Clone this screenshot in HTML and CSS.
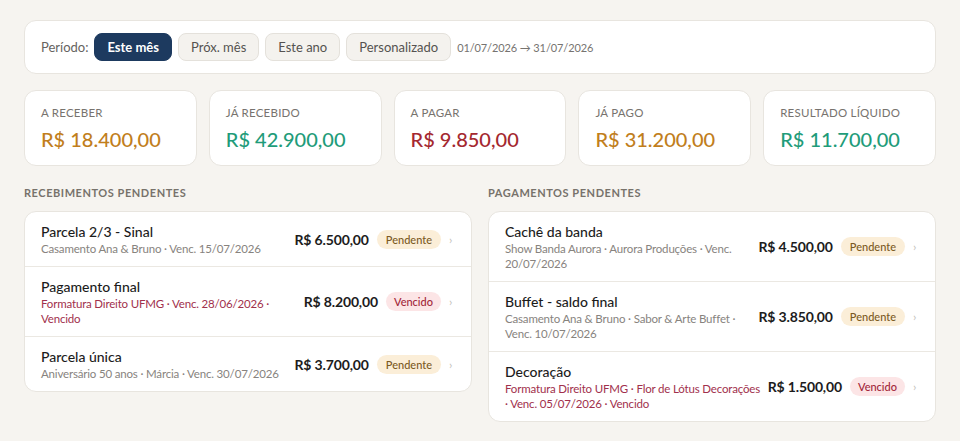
FILE: index.html
```html
<!DOCTYPE html>
<html lang="pt-BR">
<head>
<meta charset="utf-8">
<title>Financeiro</title>
<link rel="stylesheet" href="styles.css">
</head>
<body>
<main class="page">
  <section class="card filter">
    <span class="filter-label">Período:</span>
    <button class="chip chip-active">Este mês</button>
    <button class="chip">Próx. mês</button>
    <button class="chip">Este ano</button>
    <button class="chip">Personalizado</button>
    <span class="range">01/07/2026 → 31/07/2026</span>
  </section>

  <section class="stats">
    <div class="card stat"><div class="stat-label">A receber</div><div class="stat-value c-orange">R$ 18.400,00</div></div>
    <div class="card stat"><div class="stat-label">Já recebido</div><div class="stat-value c-green">R$ 42.900,00</div></div>
    <div class="card stat"><div class="stat-label">A pagar</div><div class="stat-value c-red">R$ 9.850,00</div></div>
    <div class="card stat"><div class="stat-label">Já pago</div><div class="stat-value c-orange">R$ 31.200,00</div></div>
    <div class="card stat"><div class="stat-label">Resultado líquido</div><div class="stat-value c-green">R$ 11.700,00</div></div>
  </section>

  <section class="columns">
    <div class="col">
      <h2 class="section-title">Recebimentos pendentes</h2>
      <ul class="card list">
        <li class="row">
          <div class="row-main"><div class="row-title">Parcela 2/3 - Sinal</div><div class="row-sub">Casamento Ana &amp; Bruno · Venc. 15/07/2026</div></div>
          <div class="row-side"><span class="amount">R$ 6.500,00</span><span class="pill pill-pend">Pendente</span><span class="chev">›</span></div>
        </li>
        <li class="row">
          <div class="row-main"><div class="row-title">Pagamento final</div><div class="row-sub late">Formatura Direito UFMG · Venc. 28/06/2026 · Vencido</div></div>
          <div class="row-side"><span class="amount">R$ 8.200,00</span><span class="pill pill-late">Vencido</span><span class="chev">›</span></div>
        </li>
        <li class="row">
          <div class="row-main"><div class="row-title">Parcela única</div><div class="row-sub">Aniversário 50 anos · Márcia · Venc. 30/07/2026</div></div>
          <div class="row-side"><span class="amount">R$ 3.700,00</span><span class="pill pill-pend">Pendente</span><span class="chev">›</span></div>
        </li>
      </ul>
    </div>
    <div class="col">
      <h2 class="section-title">Pagamentos pendentes</h2>
      <ul class="card list">
        <li class="row">
          <div class="row-main"><div class="row-title">Cachê da banda</div><div class="row-sub">Show Banda Aurora · Aurora Produções · Venc. 20/07/2026</div></div>
          <div class="row-side"><span class="amount">R$ 4.500,00</span><span class="pill pill-pend">Pendente</span><span class="chev">›</span></div>
        </li>
        <li class="row">
          <div class="row-main"><div class="row-title">Buffet - saldo final</div><div class="row-sub">Casamento Ana &amp; Bruno · Sabor &amp; Arte Buffet · Venc. 10/07/2026</div></div>
          <div class="row-side"><span class="amount">R$ 3.850,00</span><span class="pill pill-pend">Pendente</span><span class="chev">›</span></div>
        </li>
        <li class="row">
          <div class="row-main"><div class="row-title">Decoração</div><div class="row-sub late">Formatura Direito UFMG · Flor de Lótus Decorações ·&nbsp;Venc. 05/07/2026 · Vencido</div></div>
          <div class="row-side"><span class="amount">R$ 1.500,00</span><span class="pill pill-late">Vencido</span><span class="chev">›</span></div>
        </li>
      </ul>
    </div>
  </section>
</main>
</body>
</html>
```

FILE: styles.css
```css
* { box-sizing: border-box; }
html, body { margin: 0; padding: 0; }
body {
  background: #f6f4f0;
  font-family: Lato, "Noto Sans", sans-serif;
  color: #1c1c1c;
}
.page { padding: 20px 24px; }
.card {
  background: #ffffff;
  border: 1px solid #e8e5df;
  border-radius: 12px;
}
.filter {
  display: flex;
  align-items: center;
  gap: 6px;
  padding: 12px 16px;
}
.filter-label { font-size: 13px; color: #666360; }
.chip {
  font-family: inherit;
  font-size: 13px;
  height: 28px;
  padding: 0 12px;
  border-radius: 8px;
  border: 1px solid #e4e1db;
  background: #f4f2ee;
  color: #555250;
  cursor: pointer;
}
.chip-active {
  background: #1d3a5f;
  border-color: #1d3a5f;
  color: #ffffff;
  font-weight: 700;
}
.range { font-size: 11px; letter-spacing: -0.01em; color: #767370; }

.stats {
  display: grid;
  grid-template-columns: repeat(5, 1fr);
  gap: 12px;
  margin-top: 16px;
}
.stat { padding: 14px 16px; }
.stat-label {
  font-size: 11.5px;
  line-height: 16px;
  text-transform: uppercase;
  letter-spacing: 0.02em;
  color: #77736e;
}
.stat-value {
  margin-top: 6px;
  font-size: 20px;
  line-height: 24px;
  font-weight: 500;
}
.c-orange { color: #c17e1c; }
.c-green { color: #1f9c7a; }
.c-red { color: #a4282f; }

.columns {
  display: grid;
  grid-template-columns: 1fr 1fr;
  gap: 16px;
  margin-top: 20px;
  align-items: start;
}
.section-title {
  margin: 0 0 11px;
  font-size: 11px;
  line-height: 14px;
  font-weight: 700;
  letter-spacing: 0.05em;
  text-transform: uppercase;
  color: #77726b;
}
.list { list-style: none; margin: 0; padding: 0; }
.row {
  display: flex;
  align-items: center;
  gap: 0;
  padding: 10px 16px;
  border-top: 1px solid #ebe8e2;
}
.row:first-child { border-top: none; }
.row-main { flex: 1; min-width: 0; }
.row-title { font-size: 14px; line-height: 19px; font-weight: 500; color: #1c1c1c; }
.row-sub { font-size: 11.5px; line-height: 15px; letter-spacing: -0.015em; color: #87837e; }
.row-sub.late { color: #a1304c; }
.row-side { display: flex; align-items: center; flex-shrink: 0; }
.amount { font-size: 14px; font-weight: 700; letter-spacing: -0.01em; color: #1c1c1c; white-space: nowrap; }
.pill {
  margin-left: 8px;
  font-size: 11px;
  line-height: 19px;
  padding: 0 9px;
  border-radius: 10px;
  font-weight: 500;
}
.pill-pend { background: #fbeed8; color: #7b5a24; }
.pill-late { background: #fce5e6; color: #a3283a; padding: 0 8px; }
.chev { margin-left: 8px; width: 6px; font-size: 12px; color: #c3c0ba; }
```
